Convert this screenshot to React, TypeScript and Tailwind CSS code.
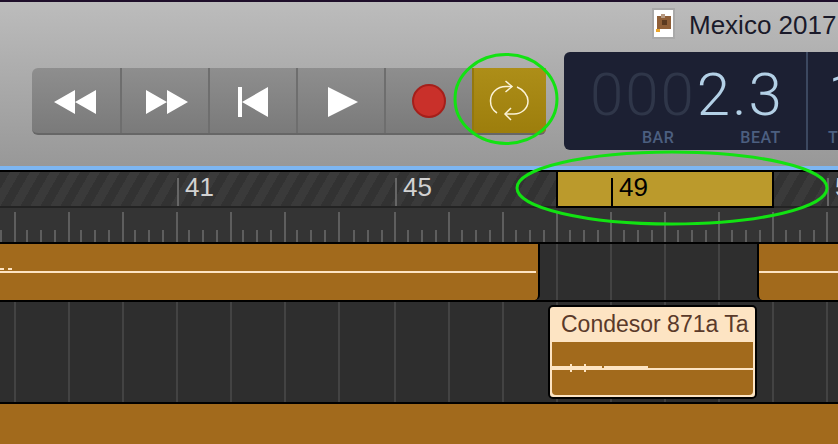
const majors = [15, 69, 123, 177, 231, 285, 339, 395, 449, 503, 557, 611, 665, 719, 773, 827];
const minors = [0, 26, 40, 54, 80, 94, 108, 134, 148, 162, 188, 202, 216, 242, 256, 270, 296, 310, 324, 353, 367, 381, 407, 421, 435, 461, 475, 489, 515, 529, 543, 569, 583, 597, 623, 637, 651, 677, 691, 705, 731, 745, 759, 785, 799, 813];

const sans = "font-['Liberation_Sans',Arial,sans-serif]";

// Transport glyphs are drawn in their own little boxes
const Rewind = () => (
  <svg width="42" height="24" viewBox="0 0 42 24" className="mr-[2px] mt-[3px] fill-white">
    <path d="M0 12 21 0v24zM21 12 42 0v24z" />
  </svg>
);

const Forward = () => (
  <svg width="42" height="24" viewBox="0 0 42 24" className="ml-[4px] mt-[3px] fill-white">
    <path d="M0 0 21 12 0 24zM21 0 42 12 21 24z" />
  </svg>
);

const SkipBack = () => (
  <svg width="30" height="30" viewBox="0 0 30 30" className="mt-[3px] fill-white">
    <path d="M0 0h4v30H0zM4 15 30 0v30z" />
  </svg>
);

const Play = () => (
  <svg width="30" height="30" viewBox="0 0 30 30" className="ml-[4px] mt-[3px] fill-white">
    <path d="M0 0 30 15 0 30z" />
  </svg>
);

const CycleIcon = () => (
  <svg width="44" height="44" viewBox="0 0 44 44" fill="none" stroke="#fbf3d8" strokeWidth="1.5">
    <path d="M24 7.5H18C9 7.5 2.5 14 2.5 22C2.5 27 5 31.5 9 34" />
    <path d="M17.5 2 24 7.5 17.5 13" />
    <path d="M29 8C35 10.5 40 16 40 22C40 30 33 35 26 35H17" />
    <path d="M23 29 17 35 23 41" />
  </svg>
);

const ProjectIcon = () => (
  <svg width="19" height="27" viewBox="0 0 19 27">
    <rect x="3" y="6" width="14" height="13" fill="#8f5f38" />
    <rect x="7" y="4" width="4" height="4" fill="#b79a82" />
    <rect x="8" y="10" width="5" height="5" fill="#5c3a20" />
    <rect x="2" y="19" width="4" height="3" fill="#eaa52c" />
  </svg>
);

const TransportButton = ({ children, width }: { children: React.ReactNode; width: string }) => (
  <div className={`flex h-full items-center justify-center border-r-2 border-[#6e6e6e] ${width}`}>{children}</div>
);

const Gridlines = () => (
  <svg width="838" height="100%" className="absolute inset-0 h-full">
    {majors.map(x => (
      <rect key={x} x={x - 1} y="0" width="2" height="100%" fill="#434343" />
    ))}
  </svg>
);

export default function App() {
  return (
    <div className={`relative h-[444px] w-[838px] overflow-hidden bg-[#a26a1c] ${sans}`}>
      <div className="h-[2px] bg-[#1e0e2a]" />

      {/* Toolbar */}
      <div className="h-[164px] bg-gradient-to-b from-[#bcbcbc] to-[#989898] pl-[32px]">
        <div className="flex h-[50px] items-start pl-[620px] pt-[6px]">
          <div className="h-[31px] w-[23px] shrink-0 border-2 border-[#a9a9a9] bg-white">
            <ProjectIcon />
          </div>
          <span className="ml-[14px] whitespace-nowrap text-[26px] leading-[34px] text-[#1a1a2a]">Mexico 2017</span>
        </div>
        <div className="flex items-start">
          <div className="mt-[16px] flex h-[67px] w-[514px] shrink-0 overflow-hidden rounded-l-[6px] rounded-br-[6px] border-b-2 border-[#666] bg-gradient-to-b from-[#8e8e8e] to-[#7a7a7a]">
            <TransportButton width="w-[90px]"><Rewind /></TransportButton>
            <TransportButton width="w-[88px]"><Forward /></TransportButton>
            <TransportButton width="w-[88px]"><SkipBack /></TransportButton>
            <TransportButton width="w-[88px]"><Play /></TransportButton>
            <div className="flex h-full w-[86px] items-center justify-center">
              <div className="h-[34px] w-[34px] rounded-full border-2 border-[#a51f1a] bg-[#c9302a]" />
            </div>
            <div className="flex h-full w-[74px] items-center justify-center border-l-2 border-[#94780f] bg-gradient-to-b from-[#ad8e18] to-[#9d7e0c]">
              <CycleIcon />
            </div>
          </div>
          <div className="ml-[18px] flex h-[98px] w-[300px] shrink-0 rounded-l-[6px] bg-[#1c2033] font-['Roboto',sans-serif]">
            <div className="h-full w-[244px] border-r-2 border-[#3c4860]">
              <div className="pl-[26px] pt-[13px] text-[60px] font-light leading-[60px] tracking-[2px] whitespace-nowrap">
                <span className="text-[#2f3649]">000</span>
                <span className="ml-[1px] text-[#b3d0e6]">2.3</span>
              </div>
              <div className="mt-[5px] flex pl-[78px] text-[16px] font-medium leading-[16px] tracking-[0.5px] text-[#4c5f80]">
                <span>BAR</span>
                <span className="ml-[66px]">BEAT</span>
              </div>
            </div>
            <div className="pl-[20px] pt-[13px]">
              <div className="text-[60px] font-light leading-[60px] text-[#b3d0e6]">1</div>
              <div className="mt-[5px] text-[16px] font-medium leading-[16px] text-[#4c5f80]">T</div>
            </div>
          </div>
        </div>
      </div>

      <div className="h-[4px] bg-[#7db6f2]" />
      <div className="h-[2px] bg-black" />

      {/* Ruler */}
      <div className="relative h-[34px] bg-[#353535] bg-[repeating-linear-gradient(120deg,#323232_0,#323232_8.66px,#3a3a3a_8.66px,#3a3a3a_17.32px)]">
        <svg width="838" height="34" className="absolute inset-0">
          {[177, 395, 827].map(x => (
            <rect key={x} x={x} y="6" width="2" height="28" fill="#666666" />
          ))}
        </svg>
        <span className="absolute left-[185px] top-[2px] text-[26px] leading-[26px] text-[#d2d2d2]">41</span>
        <span className="absolute left-[403px] top-[2px] text-[26px] leading-[26px] text-[#d2d2d2]">45</span>
        <span className="absolute left-[835px] top-[2px] text-[26px] leading-[26px] text-[#d2d2d2]">5</span>
        <div className="absolute left-[556px] top-0 h-[36px] w-[218px] border-2 border-t-0 border-black bg-[#bb9a2c]">
          <div className="absolute left-[53px] top-[6px] h-[28px] w-[2px] bg-black" />
          <span className="absolute left-[61px] top-[2px] text-[26px] leading-[26px] text-black">49</span>
        </div>
      </div>
      <div className="h-[2px] bg-[#232323]" />
      <svg width="838" height="34" className="block bg-[#343434]">
        {majors.map(x => (
          <rect key={x} x={x - 1} y="4" width="2" height="30" fill="#5e5e5e" />
        ))}
        {minors.map(x => (
          <rect key={x} x={x} y="22" width="2" height="12" fill="#5e5e5e" />
        ))}
      </svg>
      <div className="h-[2px] bg-black" />

      {/* Track 1 */}
      <div className="relative flex h-[56px] bg-[#2e2e2e]">
        <Gridlines />
        <div className="relative flex h-full w-[540px] items-center rounded-br-[5px] border-r-2 border-black bg-[#a26a1c]">
          <div className="h-[2px] w-[536px] bg-[#fde4c3]" />
          <div className="absolute left-0 top-[24px] h-[2px] w-[4px] bg-[#fde4c3]" />
          <div className="absolute left-[8px] top-[24px] h-[2px] w-[4px] bg-[#fde4c3]" />
        </div>
        <div className="relative ml-auto flex h-full w-[81px] items-center rounded-bl-[5px] border-l-2 border-black bg-[#a26a1c]">
          <div className="h-[2px] w-full bg-[#fde4c3]" />
        </div>
      </div>
      <div className="h-[2px] bg-black" />

      {/* Track 2 */}
      <div className="relative h-[100px] bg-[#2e2e2e] pl-[548px] pt-[3px]">
        <Gridlines />
        <div className="relative h-[94px] w-[209px] overflow-hidden rounded-[5px] border-2 border-black bg-[#fde4c3]">
          <div className="h-[35px] pl-[11px] pt-[4px] text-[23px] leading-[26px] whitespace-nowrap text-[#5a3a2a]">Condesor 871a Ta</div>
          <div className="relative mx-[2px] h-[53px] rounded-b-[4px] bg-[#a26a1c]">
            <div className="absolute inset-x-0 top-[26px] h-[2px] bg-[#fde4c3]" />
            <div className="absolute left-0 top-[24px] h-[2px] w-[50px] bg-[#fde4c3]" />
            <div className="absolute left-[52px] top-[24px] h-[2px] w-[44px] bg-[#fde4c3]" />
            <div className="absolute left-[18px] top-[22px] h-[8px] w-[2px] bg-[#fde4c3]" />
            <div className="absolute left-[32px] top-[22px] h-[8px] w-[2px] bg-[#fde4c3]" />
          </div>
        </div>
      </div>
      <div className="h-[2px] bg-black" />

      {/* Annotation rings */}
      <svg width="838" height="444" className="pointer-events-none absolute inset-0" fill="none" stroke="#12e212" strokeWidth="3">
        <ellipse cx="506" cy="99" rx="51" ry="44.5" />
        <ellipse cx="672" cy="188" rx="155" ry="36" />
      </svg>
    </div>
  );
}
